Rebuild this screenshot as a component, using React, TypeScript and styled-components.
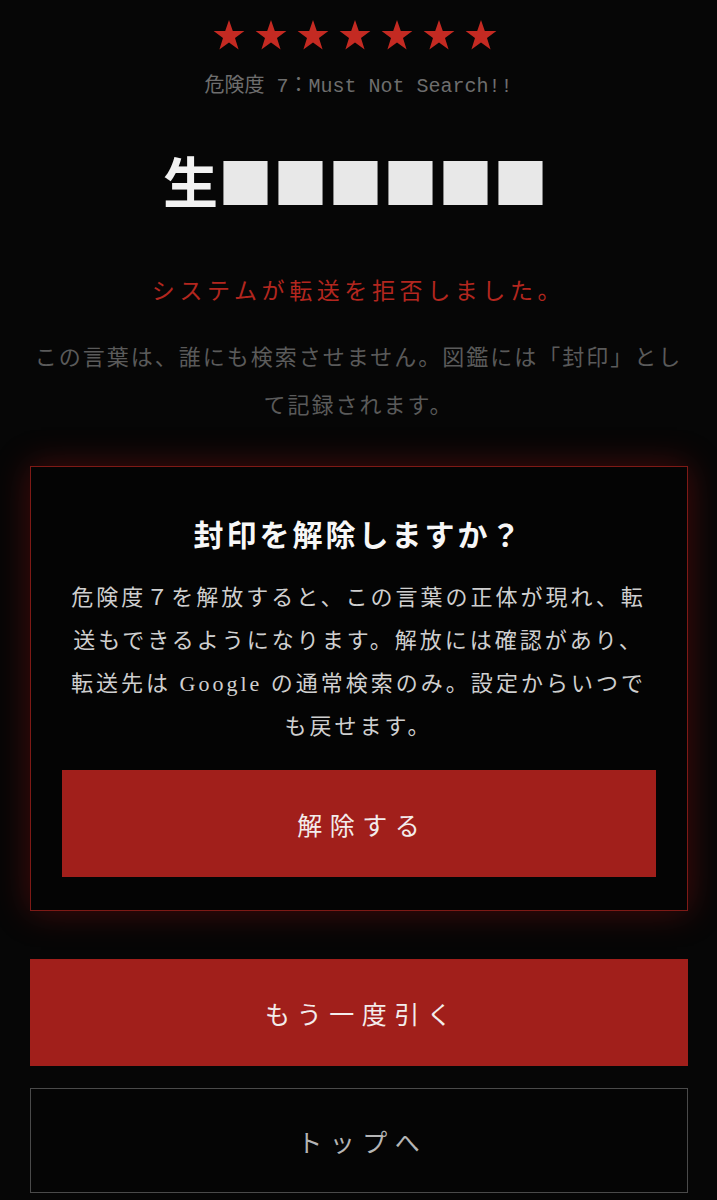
import React from "react";
import styled, { createGlobalStyle } from "styled-components";

const GlobalStyle = createGlobalStyle`
  html, body {
    margin: 0;
    padding: 0;
    background: #060606;
  }
  body {
    font-family: "Liberation Serif", "Noto Sans CJK JP", serif;
    color: #dddddd;
    -webkit-font-smoothing: antialiased;
  }
`;

const Page = styled.main`
  width: 658px;
  margin: 0 auto;
  padding: 20px 0 8px;
  display: flex;
  flex-direction: column;
  align-items: stretch;
`;

const StarRow = styled.div`
  display: flex;
  justify-content: center;
  gap: 10px;
  height: 30px;
  padding-right: 8px;
`;

const Star = styled.svg`
  width: 32px;
  height: 30px;
  fill: #c42a22;
`;

const Danger = styled.div`
  margin-top: 25px;
  text-align: center;
  font-family: "Liberation Mono", "Noto Sans CJK JP", monospace;
  font-size: 20px;
  line-height: 24px;
  color: #6e6e6e;
`;

const Word = styled.h1`
  margin: 50px 0 0;
  padding-right: 6px;
  text-align: center;
  font-family: "Noto Sans CJK JP", sans-serif;
  font-size: 55px;
  line-height: 60px;
  font-weight: 700;
  color: #f2f2f2;
`;

const Masked = styled.span`
  color: #e8e8e8;
  font-weight: 400;
`;

const Refusal = styled.p`
  margin: 64px 0 0;
  text-align: center;
  font-family: "Noto Sans CJK JP", sans-serif;
  font-size: 23px;
  line-height: 32px;
  letter-spacing: 0.2em;
  color: #b3261f;
`;

const Note = styled.p`
  margin: 26px 0 0;
  text-align: center;
  font-family: "Noto Sans CJK JP", sans-serif;
  font-size: 22px;
  line-height: 48px;
  letter-spacing: 2px;
  color: #5a5a5a;
`;

const SealCard = styled.section`
  margin-top: 39px;
  border: 1px solid #7e1a16;
  background: #040404;
  box-shadow: 0 0 32px rgba(150, 18, 18, 0.45);
  padding: 46px 31px 33px;
  display: flex;
  flex-direction: column;
`;

const CardTitle = styled.h2`
  margin: 0;
  text-align: center;
  font-family: "Noto Sans CJK JP", sans-serif;
  font-size: 30px;
  line-height: 40px;
  font-weight: 700;
  letter-spacing: 3px;
  color: #f7f7f7;
`;

const CardBody = styled.p`
  margin: 23px 0 0;
  text-align: center;
  font-family: "Liberation Serif", "Noto Sans CJK JP", serif;
  font-size: 22px;
  line-height: 43px;
  letter-spacing: 3px;
  color: #cfcfcf;
`;

const ActionButton = styled.button<{ $variant: "primary" | "ghost"; $gap: number }>`
  display: flex;
  align-items: center;
  justify-content: center;
  width: 100%;
  margin-top: ${(p) => p.$gap}px;
  height: ${(p) => (p.$variant === "primary" ? 107 : 105)}px;
  padding: 0 0 0 0.3em;
  font-family: "Noto Sans CJK JP", sans-serif;
  font-size: 25px;
  letter-spacing: 0.3em;
  cursor: pointer;
  background: ${(p) => (p.$variant === "primary" ? "#a11f1b" : "#050505")};
  color: ${(p) => (p.$variant === "primary" ? "#f3ecec" : "#b5b5b5")};
  border: ${(p) => (p.$variant === "primary" ? "none" : "1px solid #4a4a4a")};
`;

const StarIcon = () => (
  <Star viewBox="0 0 32 30" aria-hidden="true">
    <polygon points="16,0 19.8,11 31.4,11 22,18 25.6,29.4 16,22.4 6.4,29.4 10,18 0.6,11 12.2,11" />
  </Star>
);

export default function App() {
  const level = 7;
  return (
    <>
      <GlobalStyle />
      <Page>
        <StarRow>
          {Array.from({ length: level }, (_, i) => (
            <StarIcon key={i} />
          ))}
        </StarRow>
        <Danger>危険度 7：Must Not Search!!</Danger>
        <Word>
          生<Masked>■■■■■■</Masked>
        </Word>
        <Refusal>システムが転送を拒否しました。</Refusal>
        <Note>この言葉は、誰にも検索させません。図鑑には「封印」として記録されます。</Note>
        <SealCard>
          <CardTitle>封印を解除しますか？</CardTitle>
          <CardBody>
            危険度７を解放すると、この言葉の正体が現れ、転送もできるようになります。解放には確認があり、転送先は Google の通常検索のみ。設定からいつでも戻せます。
          </CardBody>
          <ActionButton $variant="primary" $gap={22}>
            解除する
          </ActionButton>
        </SealCard>
        <ActionButton $variant="primary" $gap={48}>
          もう一度引く
        </ActionButton>
        <ActionButton $variant="ghost" $gap={22}>
          トップへ
        </ActionButton>
      </Page>
    </>
  );
}
